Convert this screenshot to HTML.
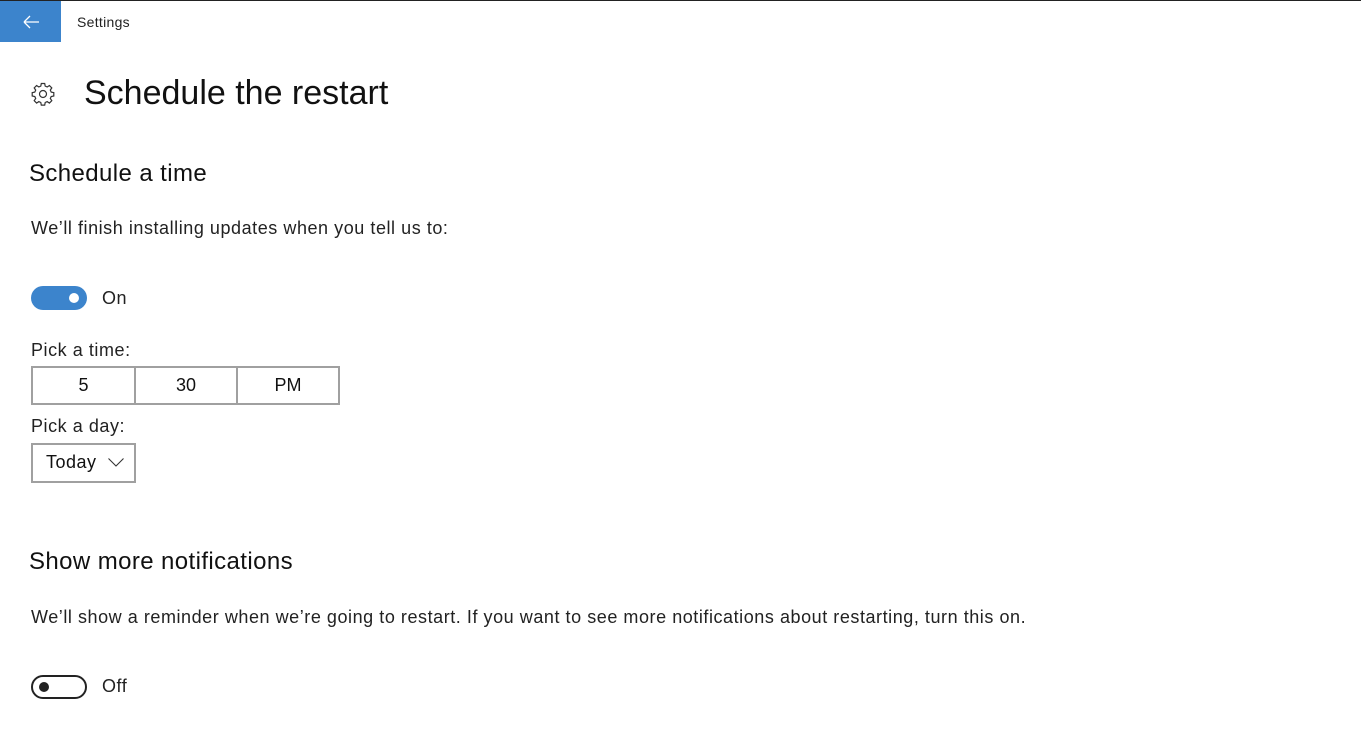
<!DOCTYPE html>
<html><head><style>
body{margin:0;width:1361px;height:749px;background:#fff;font-family:"Liberation Sans",sans-serif;color:#000;position:relative;overflow:hidden}
.a{position:absolute;white-space:nowrap}
.b{font-size:18px;letter-spacing:0.55px;color:#222}
.h{font-size:24px;letter-spacing:0.4px;color:#111}
.sw{position:absolute;width:56px;height:24px;border-radius:12px;box-sizing:border-box}
.cell{position:absolute;top:366px;height:39px;border:2px solid #a0a0a0;box-sizing:border-box;font-size:18px;text-align:center;line-height:35px;color:#111}
</style></head><body>
<div class="a" style="left:0;top:0;width:1361px;height:1px;background:#222"></div>
<div class="a" style="left:0;top:1px;width:61px;height:41px;background:#3c84cc">
<svg width="61" height="41"><path d="M24 21H39M24 21L30 15M24 21L30 27" stroke="#fff" stroke-width="1.3" fill="none"/></svg></div>
<div class="a" style="left:77px;top:14px;font-size:14px;letter-spacing:0.3px;color:#222">Settings</div>
<svg class="a" style="left:30px;top:81px" width="26" height="26" viewBox="0 0 26 26"><g fill="none" stroke="#333" stroke-width="1.2"><circle cx="13" cy="13" r="3.5"/><path d="M11.3 2.5h3.4l.5 2.6 2 .9 2.2-1.5 2.4 2.4-1.5 2.2.9 2 2.6.5v3.4l-2.6.5-.9 2 1.5 2.2-2.4 2.4-2.2-1.5-2 .9-.5 2.6h-3.4l-.5-2.6-2-.9-2.2 1.5-2.4-2.4 1.5-2.2-.9-2-2.6-.5v-3.4l2.6-.5.9-2-1.5-2.2 2.4-2.4 2.2 1.5 2-.9z"/></g></svg>
<div class="a" style="left:84px;top:74px;font-size:34px;color:#111">Schedule the restart</div>
<div class="a h" style="left:29px;top:160px">Schedule a time</div>
<div class="a b" style="left:31px;top:218px">We’ll finish installing updates when you tell us to:</div>
<div class="sw" style="left:31px;top:286px;background:#3c84cc"><div style="position:absolute;left:38px;top:7px;width:10px;height:10px;border-radius:50%;background:#fff"></div></div>
<div class="a b" style="left:102px;top:288px">On</div>
<div class="a b" style="left:31px;top:340px">Pick a time:</div>
<div class="cell" style="left:31px;width:105px">5</div>
<div class="cell" style="left:134px;width:104px">30</div>
<div class="cell" style="left:236px;width:104px">PM</div>
<div class="a b" style="left:31px;top:416px">Pick a day:</div>
<div class="a" style="left:31px;top:443px;width:105px;height:40px;border:2px solid #a0a0a0;box-sizing:border-box"></div>
<div class="a" style="left:46px;top:452px;font-size:18px;letter-spacing:0.5px;color:#111">Today</div>
<svg class="a" style="left:107px;top:456px" width="18" height="12"><path d="M1.5 2.5l7.5 7.5 7.5-7.5" fill="none" stroke="#333" stroke-width="1.1"/></svg>
<div class="a h" style="left:29px;top:548px">Show more notifications</div>
<div class="a b" style="left:31px;top:607px">We’ll show a reminder when we’re going to restart. If you want to see more notifications about restarting, turn this on.</div>
<div class="sw" style="left:31px;top:675px;border:2px solid #222"><div style="position:absolute;left:6px;top:5px;width:10px;height:10px;border-radius:50%;background:#222"></div></div>
<div class="a b" style="left:102px;top:676px">Off</div>
</body></html>
